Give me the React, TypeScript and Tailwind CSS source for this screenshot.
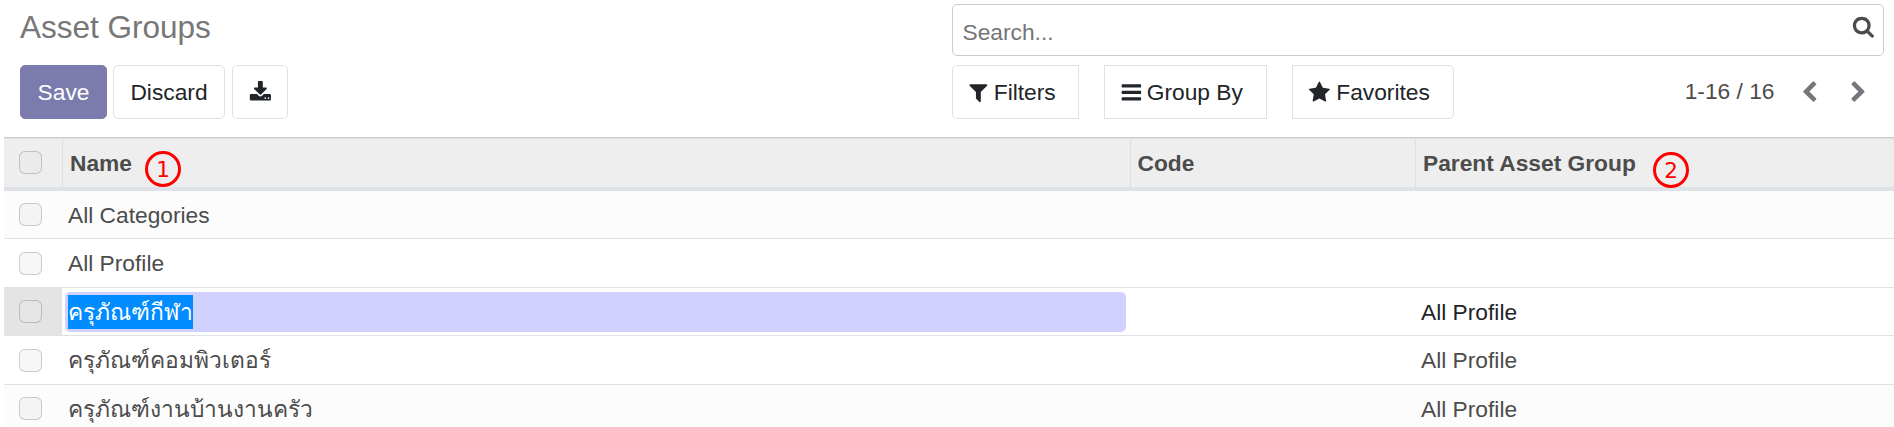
import type { ReactNode } from "react";

const paths = {
  star: "M1728 647q0 22-26 48l-363 354 86 500q1 7 1 20 0 21-10.5 35.5t-30.5 14.5q-19 0-40-12l-449-236-449 236q-22 12-40 12-21 0-31.5-14.5t-10.5-35.5q0-6 2-20l86-500-364-354q-25-27-25-48 0-37 56-46l502-73 225-455q19-41 49-41t49 41l225 455 502 73q56 9 56 46z",
  filter:
    "M1595 295q17 41-14 70l-493 493v742q0 42-39 59-13 5-25 5-27 0-45-19l-256-256q-19-19-19-45v-486l-493-493q-31-29-14-70 17-39 59-39h1280q42 0 59 39z",
  bars: "M1664 1344v128q0 26-19 45t-45 19h-1408q-26 0-45-19t-19-45v-128q0-26 19-45t45-19h1408q26 0 45 19t19 45zm0-512v128q0 26-19 45t-45 19h-1408q-26 0-45-19t-19-45v-128q0-26 19-45t45-19h1408q26 0 45 19t19 45zm0-512v128q0 26-19 45t-45 19h-1408q-26 0-45-19t-19-45v-128q0-26 19-45t45-19h1408q26 0 45 19t19 45z",
  download:
    "M1344 1344q0-26-19-45t-45-19-45 19-19 45 19 45 45 19 45-19 19-45zm256 0q0-26-19-45t-45-19-45 19-19 45 19 45 45 19 45-19 19-45zm128-224v320q0 40-28 68t-68 28h-1472q-40 0-68-28t-28-68v-320q0-40 28-68t68-28h465l135 136q58 56 136 56t136-56l136-136h464q40 0 68 28t28 68zm-325-569q17 41-14 70l-448 448q-18 19-45 19t-45-19l-448-448q-31-29-14-70 17-39 59-39h256v-448q0-26 19-45t45-19h256q26 0 45 19t19 45v448h256q42 0 59 39z",
  search:
    "M1216 832q0-185-131.5-316.5t-316.5-131.5-316.5 131.5-131.5 316.5 131.5 316.5 316.5 131.5 316.5-131.5 131.5-316.5zm512 832q0 52-38 90t-90 38q-54 0-90-38l-343-342q-179 124-399 124-143 0-273.5-55.5t-225-150-150-225-55.5-273.5 55.5-273.5 150-225 225-150 273.5-55.5 273.5 55.5 225 150 150 225 55.5 273.5q0 220-124 399l343 343q37 37 37 90z",
  left: "M1427 301l-531 531 531 531q19 19 19 45t-19 45l-166 166q-19 19-45 19t-45-19l-742-742q-19-19-19-45t19-45l742-742q19-19 45-19t45 19l166 166q19 19 19 45t-19 45z",
  right:
    "M1363 877l-742 742q-19 19-45 19t-45-19l-166-166q-19-19-19-45t19-45l531-531-531-531q-19-19-19-45t19-45l166-166q19-19 45-19t45 19l742 742q19 19 19 45t-19 45z",
};

function Icon({ name, className = "" }: { name: keyof typeof paths; className?: string }) {
  return (
    <svg viewBox="0 0 1792 1792" className={`h-[22.75px] w-[22.75px] shrink-0 fill-current ${className}`}>
      <path d={paths[name]} />
    </svg>
  );
}

function Check({ className = "bg-black/[0.03]" }: { className?: string }) {
  return (
    <span
      role="checkbox"
      aria-checked="false"
      className={`ml-[15px] block h-[23px] w-[23px] rounded-[6px] border border-black/[0.18] ${className}`}
    />
  );
}

function Marker({ n, className }: { n: number; className: string }) {
  return (
    <span
      className={`absolute flex h-9 w-9 items-center justify-center rounded-full border-[#ff0000] border-3 pt-px font-['DejaVu_Sans'] text-[21.5px] font-normal leading-none text-[#ff0000] ${className}`}
    >
      {n}
    </span>
  );
}

const cols = "grid grid-cols-[58px_1068px_285px_1fr]";

function Row({
  name,
  parent,
  className,
  checkClass = "pt-3",
}: {
  name: string;
  parent?: string;
  className: string;
  checkClass?: string;
}) {
  return (
    <div className={`${cols} border-b border-[#dee2e6] ${className}`}>
      <div className={checkClass}>
        <Check />
      </div>
      <div className="pl-[6px] pt-[11px]">{name}</div>
      <div />
      <div className="pl-[6px] pt-[11px]">{parent}</div>
    </div>
  );
}

function Button({ className, children }: { className: string; children: ReactNode }) {
  return <button className={`flex h-[54px] items-center border ${className}`}>{children}</button>;
}

export default function App() {
  return (
    <div className="h-[427px] w-[1894px] overflow-hidden bg-white font-['Liberation_Sans',sans-serif] text-[22.75px] leading-[26px] text-[#4c4c4c]">
      <header className="flex h-[137px]">
        <div className="w-[952px] pl-5 pt-[9px]">
          <h1 className="h-14 text-[31.5px] leading-9 text-[#777777]">Asset Groups</h1>
          <div className="flex text-[#212529]">
            <Button className="w-[87px] justify-center rounded-[5px] border-[#7c7bad] bg-[#7c7bad] text-white">
              Save
            </Button>
            <Button className="ml-[6px] w-[112px] justify-center rounded-[5px] border-[#dee2e6]">Discard</Button>
            <Button className="ml-[7px] w-14 justify-center rounded-[5px] border-[#dee2e6]">
              <Icon name="download" />
            </Button>
          </div>
        </div>
        <div className="w-[932px] pt-1">
          <div className="flex h-[52px] justify-between rounded-[5px] border border-[#cccccc] pl-[9.5px] pr-[8.5px] pt-[14px]">
            <span className="text-[#757575]">Search...</span>
            <Icon name="search" className="-mt-[4px]" />
          </div>
          <div className="mt-[9px] flex">
            <div className="flex gap-[25px] text-[#212529]">
              <Button className="w-[127px] rounded-l-[5px] border-[#dee2e6] pl-[14px]">
                <Icon name="filter" />
                <span className="ml-1">Filters</span>
              </Button>
              <Button className="w-[163px] border-[#dee2e6] pl-[14.7px]">
                <Icon name="bars" />
                <span className="ml-[4.3px]">Group By</span>
              </Button>
              <Button className="w-[162px] rounded-r-[5px] border-[#dee2e6] pl-[15px]">
                <Icon name="star" />
                <span className="ml-[5.5px]">Favorites</span>
              </Button>
            </div>
            <div className="ml-auto flex items-center pr-[14px]">
              <span className="-mt-[2px]">1-16 / 16</span>
              <Icon name="left" className="ml-[23px] text-[#75757c]" />
              <Icon name="right" className="ml-[27px] text-[#75757c]" />
            </div>
          </div>
        </div>
      </header>

      <main className="ml-1">
        <div className="relative h-[54px] border-b-4 border-t border-b-[#dee2e6] border-t-[#c8c9cb] bg-[#eeeeee] font-bold">
          <div className={`${cols} h-[49px] border-t border-[#dee2e6]`}>
            <div className="pt-3">
              <Check className="bg-black/[0.01]" />
            </div>
            <div className="border-l border-[#dcdfe2] pl-[7px] pt-[11px]">Name</div>
            <div className="border-l border-[#dcdfe2] pl-[6.5px] pt-[11px]">Code</div>
            <div className="border-l border-[#dcdfe2] pl-[7px] pt-[11px]">Parent Asset Group</div>
          </div>
          <Marker n={1} className="left-[141px] top-[13.3px]" />
          <Marker n={2} className="left-[1649px] top-[14px]" />
        </div>
        <Row name="All Categories" className="h-12 bg-[#fcfcfc]" />
        <Row name="All Profile" className="h-[49px]" checkClass="pt-[13px]" />
        <div className={`${cols} h-12 border-b border-[#dee2e6] text-[#212529]`}>
          <div className="bg-[#e4e4e4] pt-3">
            <Check className="bg-white/[0.05]" />
          </div>
          <div className="pl-[3px] pr-1 pt-1">
            <div className="flex h-10 rounded-[5px] bg-[#d1d1ff] pl-[3px] pt-[3px]">
              <span className="h-[34px] bg-[#008cff] pt-1 text-white">ครุภัณฑ์กีฬา</span>
            </div>
          </div>
          <div />
          <div className="pl-[6px] pt-[11px]">All Profile</div>
        </div>
        <Row name="ครุภัณฑ์คอมพิวเตอร์" parent="All Profile" className="h-[49px]" checkClass="pt-[13px]" />
        <Row name="ครุภัณฑ์งานบ้านงานครัว" parent="All Profile" className="h-[49px] bg-[#fcfcfc]" />
      </main>
    </div>
  );
}
